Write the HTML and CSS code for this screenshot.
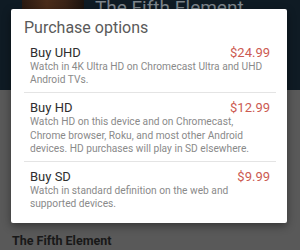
FILE: index.html
```html
<!DOCTYPE html>
<html lang="en">
<head>
    <meta charset="UTF-8">
    <meta name="viewport" content="width=device-width, initial-scale=1.0">
    <title>Purchase options</title>
    <link rel="stylesheet" href="styles.css">
</head>
<body>
    <div class="page">
        <div class="hero">
            <div class="poster"></div>
            <div class="hero-title">The Fifth Element</div>
        </div>
        <div class="details">
            <div class="movie-name">The Fifth Element</div>
        </div>
    </div>

    <div class="dialog">
        <h1 class="dialog-title">Purchase options</h1>
        <ul class="options">
            <li class="option">
                <div class="option-head">
                    <span class="option-name">Buy UHD</span>
                    <span class="option-price">$24.99</span>
                </div>
                <p class="option-desc">Watch in 4K Ultra HD on Chromecast Ultra and UHD Android TVs.</p>
            </li>
            <li class="option">
                <div class="option-head">
                    <span class="option-name">Buy HD</span>
                    <span class="option-price">$12.99</span>
                </div>
                <p class="option-desc">Watch HD on this device and on Chromecast, Chrome browser, Roku, and most other Android devices. HD purchases will play in SD elsewhere.</p>
            </li>
            <li class="option">
                <div class="option-head">
                    <span class="option-name">Buy SD</span>
                    <span class="option-price">$9.99</span>
                </div>
                <p class="option-desc">Watch in standard definition on the web and supported devices.</p>
            </li>
        </ul>
    </div>
</body>
</html>
```

FILE: styles.css
```css
body {
    margin: 0;
    width: 300px;
    height: 250px;
    overflow: hidden;
    position: relative;
    font-family: Roboto, "Noto Sans", Arial, sans-serif;
    background-color: #595959;
}

.page {
    display: flex;
    flex-direction: column;
    height: 250px;
}

.hero {
    height: 90px;
    background-color: #0f1b24;
    display: flex;
    gap: 11px;
    padding-left: 22px;
}

.poster {
    width: 62px;
    height: 30px;
    background: linear-gradient(90deg, #2a1a12, #4a2c1a 40%, #3a2316 70%, #1c130e);
}

.hero-title {
    color: #7d858c;
    font-size: 19px;
    line-height: 16px;
}

.details {
    flex: 1;
    display: flex;
    align-items: flex-end;
    padding: 0 0 2px 12px;
}

.movie-name {
    color: #181818;
    font-size: 12.5px;
    font-weight: bold;
}

.dialog {
    position: absolute;
    left: 11px;
    top: 9px;
    width: 276px;
    height: 214px;
    box-sizing: border-box;
    background-color: #fff;
    border-radius: 2px;
    box-shadow: 0 3px 8px rgba(0, 0, 0, 0.4);
    padding: 9px 11px 0 13px;
}

.dialog-title {
    margin: 0;
    font-size: 16px;
    font-weight: normal;
    color: #5a5a5a;
    line-height: 19px;
}

.options {
    list-style: none;
    margin: 5px 0 0;
    padding: 0;
}

.option {
    padding: 3px 6px 6px;
    border-bottom: 1px solid #e4e4e4;
}

.option + .option {
    padding-top: 7px;
}

.option:last-child {
    border-bottom: none;
}

.option-head {
    display: flex;
    justify-content: space-between;
    align-items: baseline;
    line-height: 15px;
}

.option-name {
    font-size: 13px;
    color: #2e2e2e;
}

.option-price {
    font-size: 13px;
    color: #cc5a52;
}

.option-desc {
    margin: 0;
    font-size: 10.2px;
    line-height: 13.2px;
    color: #8a8a8a;
}
```
